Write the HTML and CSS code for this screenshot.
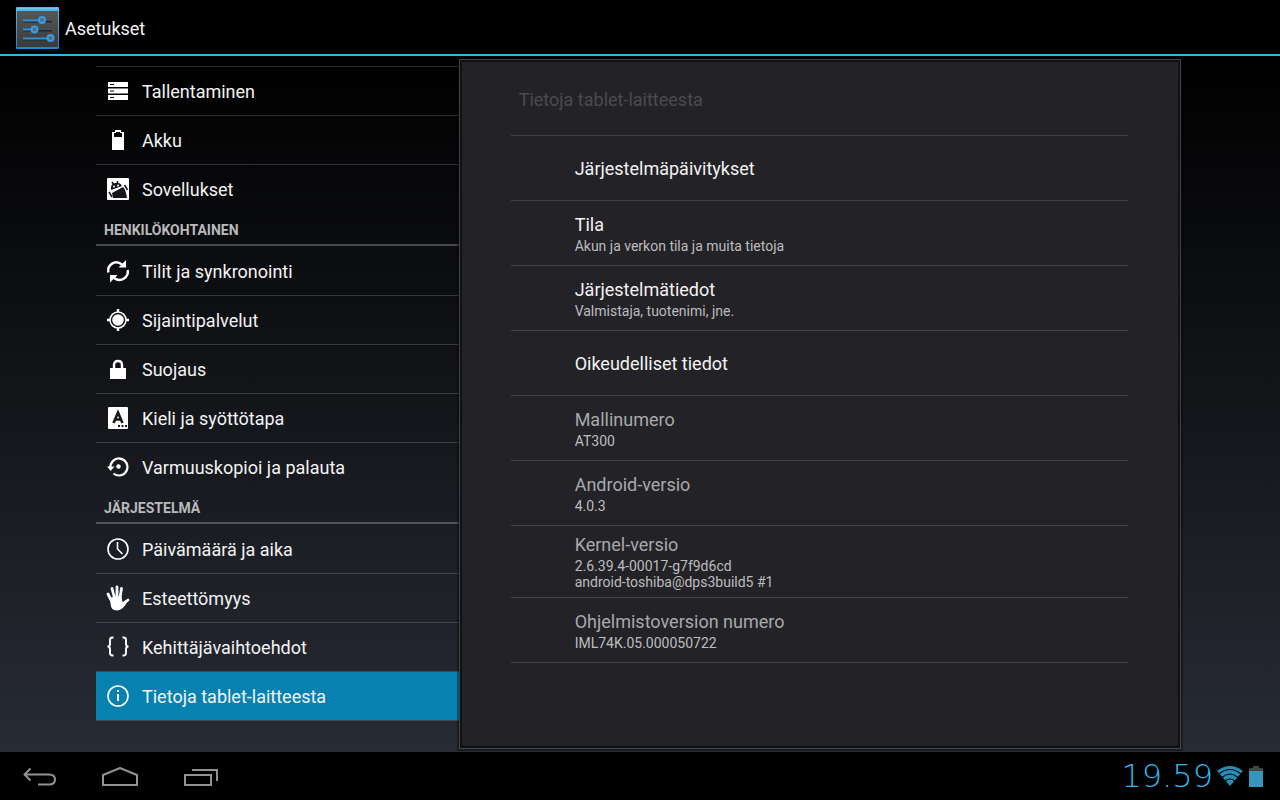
FILE: index.html
```
<!doctype html>
<html lang="fi">
<head>
<meta charset="utf-8">
<meta name="viewport" content="width=device-width,initial-scale=1">
<title>Asetukset</title>
<link rel="stylesheet" href="styles.css">
</head>
<body>
<header class="action-bar">
  <svg class="app-icon" viewBox="0 0 43 43" width="43" height="43">
    <defs>
      <linearGradient id="tile" x1="0" y1="0" x2="0" y2="1">
        <stop offset="0" stop-color="#575757"/>
        <stop offset="1" stop-color="#3a3a3a"/>
      </linearGradient>
      <linearGradient id="edge" x1="0" y1="0" x2="0" y2="1">
        <stop offset="0" stop-color="#4cc0f0"/>
        <stop offset="1" stop-color="#2a7fd0"/>
      </linearGradient>
    </defs>
    <rect width="43" height="42" rx="1" fill="url(#edge)"/>
    <rect x="1" y="4" width="41" height="36" fill="url(#tile)"/>
    <path d="M1 1.500h41" stroke="#6accf5"/>
    <path d="M7 14.500h29M7 23.500h29M7 32.500h29" stroke="#252525" stroke-width="2"/>
    <path d="M7 13.500h17M7 22.500h9M7 31.500h24" stroke="#2f8fdc" stroke-width="2"/>
    <path d="M29 13.500h7M21 22.500h15" stroke="#31566f"/>
    <g fill="#5b6b78" stroke="#3a9ce4" stroke-width="2">
      <circle cx="26" cy="13" r="3"/><circle cx="18.500" cy="22.500" r="3"/><circle cx="34.500" cy="31" r="3"/>
    </g>
  </svg>
  <h1>Asetukset</h1>
</header>

<main class="settings">
  <nav class="categories">
    <ul class="first">
      <li><a href="#storage">
        <svg viewBox="0 0 22 22"><path fill="#fff" fill-rule="evenodd" d="M1 2h20v5H1zM3 4v1h4V4zM1 8.500h20v5H1zM3 10.500v1h4v-1zM1 15h20v5H1zM3 17v1h4v-1z"/></svg>
        Tallentaminen</a></li>
      <li><a href="#battery">
        <svg viewBox="0 0 22 22"><path fill="#fff" fill-rule="evenodd" d="M8 1h6v2h3v18H5V3h3zM9 3v1H7v4h8V4h-2V3z"/></svg>
        Akku</a></li>
      <li><a href="#apps">
        <svg viewBox="0 0 22 22"><rect width="22" height="22" rx="1" fill="#fff"/>
          <path d="M4 12Q3 6 8 5t7 3zM5 15L16 9q3 3 4 11H6z" fill="#15171a"/>
          <path d="M5 4l2 3M10.500 3v3M17.500 7l3 5M2 14l3 5" stroke="#15171a" stroke-width="1.500"/>
          <circle cx="7" cy="8.500" r="1" fill="#fff"/><circle cx="11" cy="7.500" r="1" fill="#fff"/></svg>
        Sovellukset</a></li>
    </ul>
    <h2>Henkilökohtainen</h2>
    <ul>
      <li><a href="#accounts">
        <svg viewBox="0 0 22 22"><g fill="none" stroke="#fff" stroke-width="2.400"><path d="M1.300 12.500C0 5 8-1 15 4.500M20.700 10C22 17 14 23 7 18"/></g><path fill="#fff" d="M19 0v7.500h-7.500zM3 22.500V15h7.500z"/></svg>
        Tilit ja synkronointi</a></li>
      <li><a href="#location">
        <svg viewBox="0 0 22 22"><circle cx="11" cy="11" r="5.800" fill="#fff"/><circle cx="11" cy="11" r="8" fill="none" stroke="#fff" stroke-width="1.600"/><path d="M11 0v3M11 19v3M0 11h3M19 11h3" stroke="#fff" stroke-width="2.400"/></svg>
        Sijaintipalvelut</a></li>
      <li><a href="#security">
        <svg viewBox="0 0 22 22"><path fill="#fff" d="M3 10h16v11H3z"/><path d="M7 11V7q0-4 4-4t4 4v4" fill="none" stroke="#fff" stroke-width="2.400"/></svg>
        Suojaus</a></li>
      <li><a href="#language">
        <svg viewBox="0 0 22 22"><rect x="1" width="20" height="22" rx="1" fill="#fff"/><path d="M6.500 16L11 5.500 15.500 16M8 12.500h6" fill="none" stroke="#16191c" stroke-width="2.600"/><path d="M11 19h2M14.500 19h2M18 19h2" stroke="#16191c" stroke-width="2"/></svg>
        Kieli ja syöttötapa</a></li>
      <li><a href="#backup">
        <svg viewBox="0 0 22 22"><path d="M3.500 12A8.500 8.500 0 1 1 6.500 17.500" fill="none" stroke="#fff" stroke-width="2.200"/><path fill="#fff" d="M0 10.500h7.500L3.700 15z"/><circle cx="11.500" cy="10.500" r="2.200" fill="#fff"/></svg>
        Varmuuskopioi ja palauta</a></li>
    </ul>
    <h2>Järjestelmä</h2>
    <ul class="last">
      <li><a href="#date">
        <svg viewBox="0 0 22 22"><circle cx="11" cy="11" r="10" fill="none" stroke="#fff" stroke-width="1.600"/><path d="M10.500 4v7l5 5" fill="none" stroke="#fff" stroke-width="1.600"/></svg>
        Päivämäärä ja aika</a></li>
      <li><a href="#accessibility">
        <svg viewBox="0 0 22 22"><g fill="none" stroke="#fff" stroke-width="2.800" stroke-linecap="round"><path d="M1 7L4.500 14M5 1.500L7.500 11M10 0V11M14.500 1.500L13 11M21 13L16 17"/></g><path fill="#fff" d="M3 11q6-3 11.500-1l1 5 4-2 1 1q-4 9.500-11 9.500-5.500 0-6-7z"/></svg>
        Esteettömyys</a></li>
      <li><a href="#developer">
        <svg viewBox="0 0 22 22"><path d="M6.500 1.500h-1Q3 1.500 3 4v4Q3 10.500 .5 10.500 3 10.500 3 13v4q0 2.500 2.500 2.500h1M15.500 1.500h1Q19 1.500 19 4v4q0 2.500 2.500 2.500Q19 10.500 19 13v4q0 2.500-2.500 2.500h-1" fill="none" stroke="#fff" stroke-width="1.900"/></svg>
        Kehittäjävaihtoehdot</a></li>
      <li class="selected"><a href="#about" aria-current="page">
        <svg viewBox="0 0 22 22"><circle cx="11" cy="11" r="10" fill="none" stroke="#fff" stroke-width="1.600"/><path d="M11 5v2M11 9v7" stroke="#fff" stroke-width="2"/></svg>
        Tietoja tablet-laitteesta</a></li>
    </ul>
  </nav>

  <section class="panel" id="about">
    <h2>Tietoja tablet-laitteesta</h2>
    <ul>
      <li><a href="#updates">Järjestelmäpäivitykset</a></li>
      <li><a href="#status">Tila<small>Akun ja verkon tila ja muita tietoja</small></a></li>
      <li><a href="#system">Järjestelmätiedot<small>Valmistaja, tuotenimi, jne.</small></a></li>
      <li><a href="#legal">Oikeudelliset tiedot</a></li>
      <li class="info">Mallinumero<small>AT300</small></li>
      <li class="info">Android-versio<small>4.0.3</small></li>
      <li class="info">Kernel-versio<small>2.6.39.4-00017-g7f9d6cd<br>android-toshiba@dps3build5 #1</small></li>
      <li class="info">Ohjelmistoversion numero<small>IML74K.05.000050722</small></li>
    </ul>
  </section>
</main>

<footer class="system-bar">
  <button type="button" aria-label="Takaisin">
    <svg viewBox="0 0 36 20" width="36" height="20"><path d="M8.500 1.500L2.500 7.500l6 6M3 7.500h24q6 0 6 5t-6 5H16"/></svg>
  </button>
  <button type="button" aria-label="Koti">
    <svg viewBox="0 0 36 20" width="36" height="20"><path d="M1 18V8L18 1l17 7v10z"/></svg>
  </button>
  <button type="button" aria-label="Viimeisimmät">
    <svg viewBox="0 0 36 20" width="36" height="20"><path d="M3 8h26v10H3zM10 3h25v11"/></svg>
  </button>
  <div class="status">
    <time>19.59</time>
    <svg viewBox="0 0 26 20" width="26" height="20">
      <path d="M13 20L0 5Q13-5 26 5z" fill="#258db8"/>
      <path d="M2 8Q13-1 24 8M5 11.500Q13 4.500 21 11.500M8 15q5-4 10 0" fill="none" stroke="#000" stroke-width="1.200"/>
    </svg>
    <svg viewBox="0 0 14 21" width="14" height="21"><path d="M0 2h4V0h6v2h4v3H0z" fill="#444"/><path d="M0 5h14v16H0z" fill="#3796bd"/></svg>
  </div>
</footer>
</body>
</html>
```
FILE: styles.css
```
* {
    box-sizing: border-box;
}
body {
    margin: 0;
    min-height: 100vh;
    display: flex;
    flex-direction: column;
    font-family: Roboto, "Noto Sans", sans-serif;
    font-size: 18px;
    line-height: 22px;
    color: #f3f3f3;
    background: linear-gradient(#000 56px, #272b34 calc(100vh - 48px));
}
h1, h2, ul {
    margin: 0;
    padding: 0;
    font-size: 18px;
    font-weight: 400;
}
ul {
    list-style: none;
}
a {
    color: inherit;
    text-decoration: none;
}

.action-bar {
    height: 56px;
    padding: 2px 16px 0;
    display: flex;
    align-items: center;
    gap: 6px;
    background: #000;
    border-bottom: 2px solid #33b5e5;
}
.action-bar h1 {
    padding-top: 2px;
}

.settings {
    flex: 1;
    display: grid;
    grid-template-columns: 1fr 2fr;
    padding: 0 7.5%;
}

/* left column */
.categories {
    padding-top: 10px;
}
.categories ul.first {
    border-top: 1px solid #2c2d2e;
}
.categories li {
    border-bottom: 1px solid rgba(255, 255, 255, 0.17);
}
.categories li:last-child {
    border-bottom: 0;
}
.categories ul.last li:last-child {
    border-bottom: 1px solid #45494d;
}
.categories a {
    height: 48px;
    padding: 2px 0 0 11px;
    display: flex;
    align-items: center;
    gap: 13px;
}
.categories svg {
    width: 22px;
    height: 22px;
    margin-bottom: 2px;
    overflow: visible;
}
.categories h2 {
    height: 33px;
    margin-bottom: 1px;
    padding: 7px 8px 0;
    border-bottom: 2px solid rgba(255, 255, 255, 0.25);
    font-size: 14px;
    font-weight: 700;
    line-height: 20px;
    text-transform: uppercase;
    color: #b9babb;
}
.categories .selected {
    background: #0782b0;
}

/* right column */
.panel {
    margin: 3px;
    margin-left: 0;
    padding: 0 52px 0 50px;
    background: #232227;
    border: 1px solid #424447;
    box-shadow: inset 0 0 0 2px #101114, 0 0 0 2px rgba(0, 0, 0, 0.35);
    position: relative;
}
.panel h2 {
    padding: 29px 9px 24px;
    color: #4b4b4d;
}
.panel ul {
    border-top: 1px solid #434347;
    margin-left: 1px;
}
.panel li {
    min-height: 65px;
    padding: 8px 8px 7px 64px;
    display: flex;
    flex-direction: column;
    justify-content: center;
    border-bottom: 1px solid #434347;
}
.panel small {
    display: block;
    margin-top: 2px;
    font-size: 14px;
    line-height: 16px;
    color: #bdbdbf;
}
.panel .info {
    color: #a9a9ab;
}

.system-bar {
    height: 48px;
    padding: 0 17px 0 0;
    display: flex;
    align-items: center;
    background: #000;
}
.system-bar button {
    width: 80px;
    height: 48px;
    padding: 2px 0 0;
    border: 0;
    background: none;
}
.system-bar button svg {
    display: block;
    margin: 0 auto;
    fill: none;
    stroke: #929292;
    stroke-width: 2;
}
.status {
    margin-left: auto;
    display: flex;
    align-items: center;
    gap: 6px;
    color: #33b5e5;
}
.status time {
    margin-right: -2px;
    font-family: "DejaVu Sans Light", "DejaVu Sans", sans-serif;
    font-weight: 200;
    font-size: 32px;
    line-height: 48px;
}
```
